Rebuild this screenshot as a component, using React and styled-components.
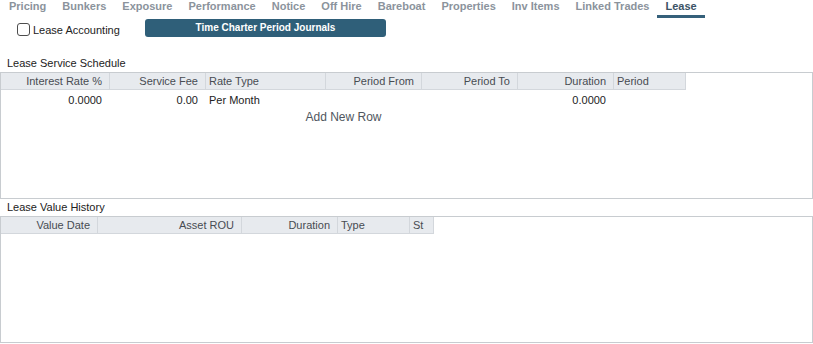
import React, { useState } from 'react';
import styled, { createGlobalStyle } from 'styled-components';

const GlobalStyle = createGlobalStyle`
	html, body {
		margin: 0;
		padding: 0;
		background: #ffffff;
	}
	body {
		font-family: "Liberation Sans", Arial, sans-serif;
		font-size: 11px;
		color: #222;
	}
`;

const tabs = ['Pricing', 'Bunkers', 'Exposure', 'Performance', 'Notice', 'Off Hire', 'Bareboat', 'Properties', 'Inv Items', 'Linked Trades', 'Lease'];

const scheduleCols = [
	{ label: 'Interest Rate %', width: 109, align: 'right' },
	{ label: 'Service Fee', width: 96, align: 'right' },
	{ label: 'Rate Type', width: 120, align: 'left' },
	{ label: 'Period From', width: 96, align: 'right' },
	{ label: 'Period To', width: 96, align: 'right' },
	{ label: 'Duration', width: 96, align: 'right' },
	{ label: 'Period', width: 72, align: 'left' },
];

const scheduleRows = [
	['0.0000', '0.00', 'Per Month', '', '', '0.0000', ''],
];

const historyCols = [
	{ label: 'Value Date', width: 97, align: 'right' },
	{ label: 'Asset ROU', width: 144, align: 'right' },
	{ label: 'Duration', width: 96, align: 'right' },
	{ label: 'Type', width: 72, align: 'left' },
	{ label: 'St', width: 24, align: 'left' },
];

export default function App () {
	const [checked, setChecked] = useState(false);
	const active = 'Lease';

	return (
		<>
			<GlobalStyle/>
			<Page>
				<TabBar>
					{tabs.map(t => (
						<Tab key={t} $active={t === active}>{t}</Tab>
					))}
				</TabBar>

				<ControlRow>
					<CheckLabel onClick={() => setChecked(!checked)}>
						<Box $checked={checked}>{checked ? '✓' : ''}</Box>
						Lease Accounting
					</CheckLabel>
					<ActionButton>Time Charter Period Journals</ActionButton>
				</ControlRow>

				<SectionTitle>Lease Service Schedule</SectionTitle>
				<Panel>
					<HeaderRow>
						{scheduleCols.map(c => (
							<HeadCell key={c.label} $w={c.width} $align={c.align}>{c.label}</HeadCell>
						))}
					</HeaderRow>
					{scheduleRows.map((row, i) => (
						<DataRow key={i}>
							{row.map((v, j) => (
								<DataCell key={j} $w={scheduleCols[j].width} $align={scheduleCols[j].align}>{v}</DataCell>
							))}
						</DataRow>
					))}
					<AddRow>Add New Row</AddRow>
				</Panel>

				<SectionTitle>Lease Value History</SectionTitle>
				<Panel>
					<HeaderRow>
						{historyCols.map(c => (
							<HeadCell key={c.label} $w={c.width} $align={c.align}>{c.label}</HeadCell>
						))}
					</HeaderRow>
				</Panel>
			</Page>
		</>
	);
}

const Page = styled.div`
	width: 813px;
`;

const TabBar = styled.div`
	display: flex;
	height: 18px;
	padding-left: 1px;
`;

const Tab = styled.div`
	padding: 0 8px 2px;
	line-height: 13px;
	font-size: 11px;
	font-weight: bold;
	color: ${p => p.$active ? '#3b5366' : '#8b939c'};
	border-bottom: 3px solid ${p => p.$active ? '#35607a' : 'transparent'};
	white-space: nowrap;
	cursor: pointer;
`;

const ControlRow = styled.div`
	display: flex;
	align-items: center;
	padding: 1px 0 0 17px;
	height: 18px;
	margin-bottom: 18px;
`;

const CheckLabel = styled.label`
	display: flex;
	align-items: center;
	width: 128px;
	font-size: 11px;
	color: #222;
	cursor: pointer;
	margin-top: 3px;
`;

const Box = styled.span`
	display: inline-flex;
	align-items: center;
	justify-content: center;
	box-sizing: border-box;
	width: 13px;
	height: 13px;
	border: 1px solid #4d4d4d;
	border-radius: 3px;
	margin-right: 3px;
	font-size: 10px;
	background: ${p => p.$checked ? '#35607a' : '#fff'};
	color: #fff;
`;

const ActionButton = styled.button`
	width: 241px;
	height: 18px;
	padding: 0;
	border: none;
	border-radius: 3px;
	background: #2f5f79;
	color: #fff;
	font-family: "Liberation Sans", Arial, sans-serif;
	font-size: 10px;
	font-weight: bold;
	line-height: 18px;
	cursor: pointer;
`;

const SectionTitle = styled.div`
	height: 17px;
	line-height: 17px;
	padding-left: 7px;
	font-size: 11px;
	color: #222;
`;

const Panel = styled.div`
	box-sizing: border-box;
	width: 813px;
	height: 127px;
	border: 1px solid #c8ccd0;
	background: #fff;
`;

const HeaderRow = styled.div`
	display: flex;
`;

const HeadCell = styled.div`
	box-sizing: border-box;
	width: ${p => p.$w}px;
	height: 17px;
	line-height: 16px;
	padding: 0 ${p => p.$align === 'right' ? '7px' : '3px'} 0 3px;
	text-align: ${p => p.$align};
	background: #e7eaee;
	border-right: 1px solid #d3d7dc;
	border-bottom: 1px solid #d3d7dc;
	color: #474c52;
	font-size: 11px;
	white-space: nowrap;
	overflow: hidden;
`;

const DataRow = styled.div`
	display: flex;
`;

const DataCell = styled.div`
	box-sizing: border-box;
	width: ${p => p.$w}px;
	height: 20px;
	line-height: 20px;
	padding: 0 ${p => p.$align === 'right' ? '7px' : '3px'} 0 3px;
	text-align: ${p => p.$align};
	border-right: 1px solid transparent;
	color: #222;
	font-size: 11px;
	white-space: nowrap;
`;

const AddRow = styled.div`
	width: 685px;
	text-align: center;
	line-height: 15px;
	font-size: 12px;
	color: #4f565e;
	cursor: pointer;
`;
